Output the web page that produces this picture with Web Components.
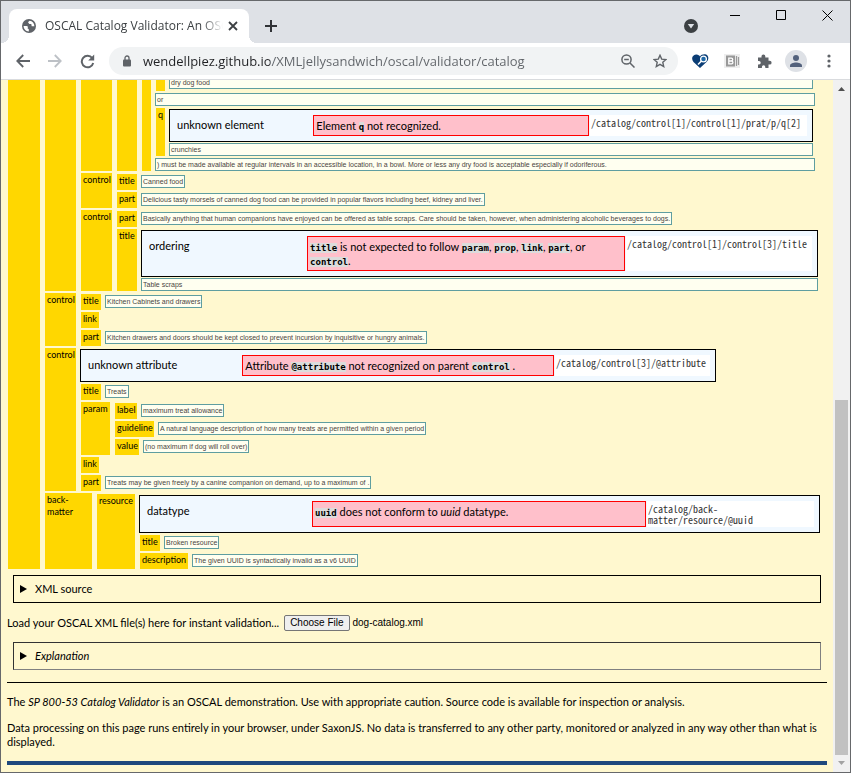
<!DOCTYPE html>
<html lang="en">
<head>
<meta charset="utf-8">
<title>OSCAL Catalog Validator</title>
<style>
html, body { margin: 0; height: 100%; }
body { background: #66686b; font-family: Lato, "Open Sans", sans-serif; font-size: 11px; line-height: 14px; color: #000; }
</style>
</head>
<body>
<browser-window>
  <tab-strip slot="tabs">OSCAL Catalog Validator: An OSCAL demonstration</tab-strip>
  <tool-bar slot="tools"></tool-bar>
  <result-tree>
    <xml-node style="--w:32px"><xml-node style="--w:31px">
      <xml-node style="--w:31px"><xml-node style="--w:20px"><xml-node style="--w:9px">
        <xml-node style="--w:9px"><text-run wide style="--end:7px">dry dog food</text-run></xml-node>
        <text-run wide style="--end:5px">or</text-run>
        <xml-node name="q" mixed style="--w:9px">
          <error-report kind="unknown element" path="/catalog/control[1]/control[1]/prat/p/q[2]" style="--cols:136fr 277fr 218fr;--end:7px">Element <code-term>q</code-term> not recognized.</error-report>
          <text-run wide style="--end:7px">crunchies</text-run>
        </xml-node>
        <text-run wide style="--end:5px">) must be made available at regular intervals in an accessible location, in a bowl. More or less any dry food is acceptable especially if odoriferous.</text-run>
      </xml-node></xml-node></xml-node>
      <xml-node name="control" style="--w:31px">
        <xml-node name="title" style="--w:20px"><text-run>Canned food</text-run></xml-node>
        <xml-node name="part" style="--w:20px"><text-run>Delicious tasty morsels of canned dog food can be provided in popular flavors including beef, kidney and liver.</text-run></xml-node>
      </xml-node>
      <xml-node name="control" style="--w:31px">
        <xml-node name="part" style="--w:20px"><text-run>Basically anything that human companions have enjoyed can be offered as table scraps. Care should be taken, however, when administering alcoholic beverages to dogs.</text-run></xml-node>
        <xml-node name="title" mixed style="--w:20px">
          <error-report kind="ordering" path="/catalog/control[1]/control[3]/title" style="--cols:158fr 320fr 187fr;--end:2px"><code-term>title</code-term> is not expected to follow <code-term>param</code-term>, <code-term>prop</code-term>, <code-term>link</code-term>, <code-term>part</code-term>, or <code-term>control</code-term>.</error-report>
          <text-run wide style="--end:2px">Table scraps</text-run>
        </xml-node>
      </xml-node>
    </xml-node>
    <xml-node name="control" style="--w:31px">
      <xml-node name="title" style="--w:20px"><text-run>Kitchen Cabinets and drawers</text-run></xml-node>
      <xml-node name="link" style="--w:18px"></xml-node>
      <xml-node name="part" style="--w:20px"><text-run>Kitchen drawers and doors should be kept closed to prevent incursion by inquisitive or hungry animals.</text-run></xml-node>
    </xml-node>
    <xml-node name="control" style="--w:31px">
      <error-report kind="unknown attribute" path="/catalog/control[3]/@attribute" style="--cols:154fr 313fr 156fr;--end:14%">Attribute <code-term>@attribute</code-term> not recognized on parent <code-term>control</code-term> .</error-report>
      <xml-node name="title" style="--w:20px"><text-run>Treats</text-run></xml-node>
      <xml-node name="param" style="--w:29px">
        <xml-node name="label" style="--w:22px"><text-run>maximum treat allowance</text-run></xml-node>
        <xml-node name="guideline" style="--w:39px"><text-run>A natural language description of how many treats are permitted within a given period</text-run></xml-node>
        <xml-node name="value" style="--w:24px"><text-run>(no maximum if dog will roll over)</text-run></xml-node>
      </xml-node>
      <xml-node name="link" style="--w:18px"></xml-node>
      <xml-node name="part" style="--w:20px"><text-run>Treats may be given freely by a canine companion on demand, up to a maximum of .</text-run></xml-node>
    </xml-node>
    <xml-node name="back-matter" style="--w:47px">
      <xml-node name="resource" style="--w:38px">
        <error-report kind="datatype" path="/catalog/back-matter/resource/@uuid" style="--cols:165fr 336fr 168fr;--end:0px"><code-term>uuid</code-term> does not conform to <em>uuid</em> datatype.</error-report>
        <xml-node name="title" style="--w:20px"><text-run>Broken resource</text-run></xml-node>
        <xml-node name="description" style="--w:48px"><text-run>The given UUID is syntactically invalid as a v6 UUID</text-run></xml-node>
      </xml-node>
    </xml-node></xml-node>
  </result-tree>
  <fold-box>XML source</fold-box>
  <file-loader>Load your OSCAL XML file(s) here for instant validation...</file-loader>
  <fold-box soft><em>Explanation</em></fold-box>
  <page-notes>
    <p>The <em>SP 800-53 Catalog Validator</em> is an OSCAL demonstration. Use with appropriate caution. Source code is available for inspection or analysis.</p>
    <p>Data processing on this page runs entirely in your browser, under SaxonJS. No data is transferred to any other party, monitored or analyzed in any way other than what is displayed.</p>
  </page-notes>
</browser-window>

<script>
const define = (name, html, setup) => {
  const template = document.createElement('template');
  customElements.define(name, class extends HTMLElement {
    constructor() {
      super();
      template.innerHTML ||= html;
      this.attachShadow({ mode: 'open' }).append(template.content.cloneNode(true));
    }
    connectedCallback() { setup?.(this, this.shadowRoot); }
  });
};

define('browser-window', `
<style>
:host { display: flex; flex-direction: column; height: 100vh; box-sizing: border-box; border: 1px solid #66686b; background: #dee1e6; }
.view { flex: 1; min-height: 0; display: flex; border-top: 1px solid #d9dbde; background: #fff8cf; }
main { flex: 1; min-width: 0; overflow: hidden; padding: 0 6px; }
.bar { width: 17px; box-sizing: border-box; padding: 0 2px; background: #f1f1f1; display: flex; flex-direction: column; align-items: center; }
.bar svg { display: block; flex: none; }
.track { flex: 1; width: 13px; display: flex; align-items: flex-end; }
.thumb { width: 13px; height: 54%; background: #c1c1c1; }
</style>
<slot name="tabs"></slot><slot name="tools"></slot>
<div class="view"><main><slot></slot></main>
<div class="bar"><svg width="13" height="17" viewBox="0 0 13 17"><path d="M3 11 6.500 7 10 11Z" fill="#505050"/></svg><div class="track"><div class="thumb"></div></div><svg width="13" height="17" viewBox="0 0 13 17"><path d="M3 6 6.500 10 10 6Z" fill="#a3a3a3"/></svg></div></div>`);

define('tab-strip', `
<style>
:host { display: flex; height: 42px; flex: none; font: 12px/18px "Open Sans", sans-serif; color: #3c4043; }
button { border: 0; padding: 0; background: none; display: grid; place-items: center; color: #202124; }
.tab { position: relative; width: 240px; height: 34px; margin: 8px 0 0 8px; box-sizing: border-box; padding: 0 11px 0 13px; border-radius: 8px 8px 0 0; background: #fff; display: flex; align-items: center; }
.tab::before, .tab::after { content: ""; position: absolute; bottom: 0; width: 8px; height: 8px; }
.tab::before { left: -8px; background: radial-gradient(circle at 0 0, #dee1e6 8px, #fff 8px); }
.tab::after { right: -8px; background: radial-gradient(circle at 100% 0, #dee1e6 8px, #fff 8px); }
.name { flex: 1; min-width: 0; margin: 0 5px 0 9px; white-space: nowrap; overflow: hidden; -webkit-mask-image: linear-gradient(to right, #000 88%, transparent); }
.new { width: 44px; margin-top: 8px; }
.gap { flex: 1; }
.drop { width: 24px; margin: 8px 9px 0 0; }
.win { width: 46px; height: 28px; }
</style>
<div class="tab">
<svg width="14" height="14" viewBox="0 0 14 14"><circle cx="7" cy="7" r="7" fill="#5f6368"/><path d="M1.600 7H4.500C6 7 6.300 8.300 5.500 9.200L6.800 10.300V12.400C3.800 12.300 1.600 10 1.600 7ZM7.500 1.700 6 3.300 7.300 5 9.300 5 9.700 7.300 12.400 7.300C12.400 4.300 10.500 2 7.500 1.700Z" fill="#fff"/></svg>
<span class="name"><slot></slot></span>
<button aria-label="Close tab"><svg width="10" height="10" viewBox="0 0 10 10"><path d="M1 1 9 9M9 1 1 9" stroke="#3c4043" stroke-width="1.800"/></svg></button></div>
<button class="new" aria-label="New tab"><svg width="12" height="12" viewBox="0 0 12 12"><path d="M6 0V12M0 6H12" stroke="#303236" stroke-width="2"/></svg></button>
<span class="gap"></span>
<button class="drop" aria-label="Search tabs"><svg width="14" height="14" viewBox="0 0 14 14"><circle cx="7" cy="7" r="7" fill="#3c4043"/><path d="M3.800 5H10.200L7 9.600Z" fill="#dee1e6"/></svg></button>
<button class="win" aria-label="Minimize"><svg width="10" height="10" viewBox="0 0 10 10"><path d="M0 5.500H10" stroke="#000"/></svg></button>
<button class="win" aria-label="Maximize"><svg width="10" height="10" viewBox="0 0 10 10"><path d="M.5.5H9.500V9.500H.5Z" fill="none" stroke="#000"/></svg></button>
<button class="win" aria-label="Close"><svg width="11" height="11" viewBox="0 0 11 11"><path d="M.5.5 10.500 10.500M10.500.5.5 10.500" stroke="#000"/></svg></button>`);

define('tool-bar', `
<style>
:host { display: flex; align-items: center; height: 36px; flex: none; background: #fff; padding: 0 10px 0 6px; }
button { border: 0; padding: 0; background: none; display: grid; place-items: center; width: 32px; height: 28px; flex: none; }
.omni { flex: 1; min-width: 0; height: 28px; border-radius: 14px; background: #f1f3f4; display: flex; align-items: center; padding: 0 2px 0 14px; margin: 0 6px 0 6px; }
input { flex: 1; min-width: 0; border: 0; outline: 0; padding: 0; margin-left: 12px; height: 24px; font: 13px/20px "Open Sans", sans-serif; color: #5f6368; -webkit-text-fill-color: transparent; background: linear-gradient(to right, #202124 127px, #5f6368 127px); -webkit-background-clip: text; background-clip: text; }
.face { width: 22px; height: 22px; border-radius: 50%; background: #dee1e6; margin: 0 5px; }
.more { width: 22px; margin-left: 6px; }
</style>
<button aria-label="Back"><svg width="14" height="14" viewBox="0 0 14 14"><path d="M14 7H1.500M7.200 1 1.300 7 7.200 13" fill="none" stroke="#5f6368" stroke-width="1.800"/></svg></button>
<button aria-label="Forward"><svg width="14" height="14" viewBox="0 0 14 14"><path d="M0 7H12.500M6.800 1 12.700 7 6.800 13" fill="none" stroke="#bdc1c6" stroke-width="1.800"/></svg></button>
<button aria-label="Reload"><svg width="15" height="15" viewBox="0 0 15 15"><path d="M12.200 4A5.800 5.800 0 1 0 13.200 9" fill="none" stroke="#5f6368" stroke-width="2"/><path d="M14.200.5V6.500H8.200Z" fill="#5f6368"/></svg></button>
<div class="omni"><svg width="8" height="12" viewBox="0 0 8 12"><path d="M2 5V3A2 2 0 0 1 6 3V5" fill="none" stroke="#5f6368" stroke-width="1.300"/><rect y="4.500" width="8" height="7" rx="1" fill="#5f6368"/></svg>
<input aria-label="Address" value="wendellpiez.github.io/XMLjellysandwich/oscal/validator/catalog">
<button aria-label="Zoom"><svg width="14" height="14" viewBox="0 0 14 14"><g fill="none" stroke="#5f6368" stroke-width="1.500"><circle cx="5.500" cy="5.500" r="4.600"/><path d="M9 9 13.500 13.500M3.200 5.500H7.800"/></g></svg></button>
<button aria-label="Bookmark"><svg width="14" height="14" viewBox="0 0 14 14"><path d="M7 1.300 8.700 5.100 13 5.500 9.800 8.300 10.700 12.500 7 10.300 3.300 12.500 4.200 8.300 1 5.500 5.300 5.100Z" fill="none" stroke="#5f6368" stroke-width="1.400"/></svg></button></div>
<button aria-label="Health search extension"><svg width="17" height="15" viewBox="0 0 17 15"><path d="M8 14 1.500 8C-1 5 0 1 4 .5 6 .3 7.500 1.500 8 2.500 9 .5 12 0 14 .5 17 1.500 17 6 14.500 8Z" fill="#0b3d75"/><circle cx="11.500" cy="5" r="2.900" fill="#1e69a8" stroke="#fff" stroke-width="1.300"/><path d="M9.200 7.300 6 10.500" stroke="#fff" stroke-width="1.600"/></svg></button>
<button aria-label="Library extension"><svg width="16" height="14" viewBox="0 0 16 14"><path d="M0 0H16V14H0Z" fill="#eee"/><path d="M2 1.500H11V12.500H2Z" fill="#999"/><path d="M4.800 4.200H7.300A1.200 1.200 0 0 1 7.300 7H4.800ZM4.800 7H7.500A1.300 1.300 0 0 1 7.500 9.800H4.800Z" fill="none" stroke="#fff" stroke-width="1.300"/><path d="M12.500 2V12M14.500 3V11" fill="none" stroke="#999" stroke-width="1.200"/></svg></button>
<button aria-label="Extensions"><svg width="15" height="15" viewBox="0 0 15 15"><path d="M1 3.500H4.500V2.300A1.900 1.900 0 0 1 8.300 2.300V3.500H11.500V6.800H12.700A1.900 1.900 0 0 1 12.700 10.600H11.500V14H8.300V13A1.700 1.700 0 0 0 4.900 13V14H1V10.500H2A1.700 1.700 0 0 0 2 7H1Z" fill="#5f6368"/></svg></button>
<button class="face" aria-label="Profile"><svg width="12" height="12" viewBox="0 0 12 12"><circle cx="6" cy="3" r="3" fill="#53617c"/><path d="M0 12V10.500C0 8.500 3.500 7.500 6 7.500S12 8.500 12 10.500V12Z" fill="#53617c"/></svg></button>
<button class="more" aria-label="Menu"><svg width="4" height="14" viewBox="0 0 4 14"><g fill="#5f6368"><circle cx="2" cy="2" r="1.600"/><circle cx="2" cy="7" r="1.600"/><circle cx="2" cy="12" r="1.600"/></g></svg></button>`);

define('result-tree', `
<style>:host { display: block; margin: -10px 7px 0 0; }</style><slot></slot>`);

define('xml-node', `
<style>
:host { display: flex; gap: 4px; margin-left: 1px; min-height: 16px; --gap: 2px; }
:host([mixed]) { --gap: 1px; }
.tag { flex: none; width: var(--w); box-sizing: border-box; padding: 1px 0 0 2px; background: #ffd700; font: 9px/12px Lato, sans-serif; color: #000; }
.kids { flex: 1; min-width: 0; display: flex; flex-direction: column; gap: var(--gap); padding-top: 1px; }
</style>
<span class="tag"></span><div class="kids"><slot></slot></div>`, (host, root) => {
  root.querySelector('.tag').textContent = host.getAttribute('name') || '';
});

define('text-run', `
<style>
:host { display: block; align-self: flex-start; box-sizing: border-box; height: 13px; border: 1px solid #5f9ea0; background: #fffff0; padding: 0 1px; font: 7px/11px "Liberation Sans", Arial, sans-serif; color: #4a4440; white-space: nowrap; }
:host([wide]) { align-self: stretch; margin-right: var(--end); }
</style><slot></slot>`);

define('code-term', `
<style>:host { font: bold 9px/12px "DejaVu Sans Mono", monospace; background: #dcdcdc; }</style><slot></slot>`);

define('error-report', `
<style>
:host { display: grid; grid-template-columns: var(--cols); column-gap: 1px; margin-right: var(--end); border: 1px solid #000; background: #f0f8ff; padding: 5px 5px 5px 7px; }
.kind { padding-top: 3px; }
.say { border: 1px solid #f00; background: #ffc0cb; padding: 3px 2px 2px; }
.path { background: #fff; padding: 2px 1px; font: 10px/11px "Noto Sans Mono CJK SC", "DejaVu Sans Mono", monospace; color: #333; }
</style>
<span class="kind"></span><div class="say"><slot></slot></div><span class="path"></span>`, (host, root) => {
  root.querySelector('.kind').textContent = host.getAttribute('kind');
  root.querySelector('.path').textContent = host.getAttribute('path');
});

define('fold-box', `
<style>
:host { display: block; margin: 6px 6px 12px; }
details { border: 1px solid #000; }
:host([soft]) details { border-color: #333 #808080 #808080 #333; }
summary { display: flex; align-items: center; height: 26px; padding-left: 6px; list-style: none; }
summary::before { content: ""; border: solid transparent; border-width: 4px 0 4px 7px; border-left-color: #000; margin-right: 8px; }
</style><details><summary><slot></slot></summary></details>`);

define('file-loader', `
<style>
:host { display: block; padding-bottom: 5px; }
form { display: flex; align-items: center; gap: 5px; height: 16px; }
input { font: 10px/12px "Liberation Sans", Arial, sans-serif; height: 16px; flex: 1; min-width: 0; }
input::file-selector-button { font: inherit; height: 16px; padding: 0 5px; margin: 0 3px 0 0; border: 1px solid #767676; border-radius: 2px; background: #efefef; }
</style>
<form><label for="pick"><slot></slot></label><input id="pick" type="file"></form>`, (host, root) => {
  const transfer = new DataTransfer();
  transfer.items.add(new File(['<catalog/>'], 'dog-catalog.xml', { type: 'text/xml' }));
  root.querySelector('input').files = transfer.files;
});

define('page-notes', `
<style>
:host { display: block; border-top: 1px solid #000; border-bottom: 4px solid #1f497d; padding-bottom: 12px; }
::slotted(p) { margin: 12px 0 0; }
</style><slot></slot>`);
</script>
</body>
</html>
